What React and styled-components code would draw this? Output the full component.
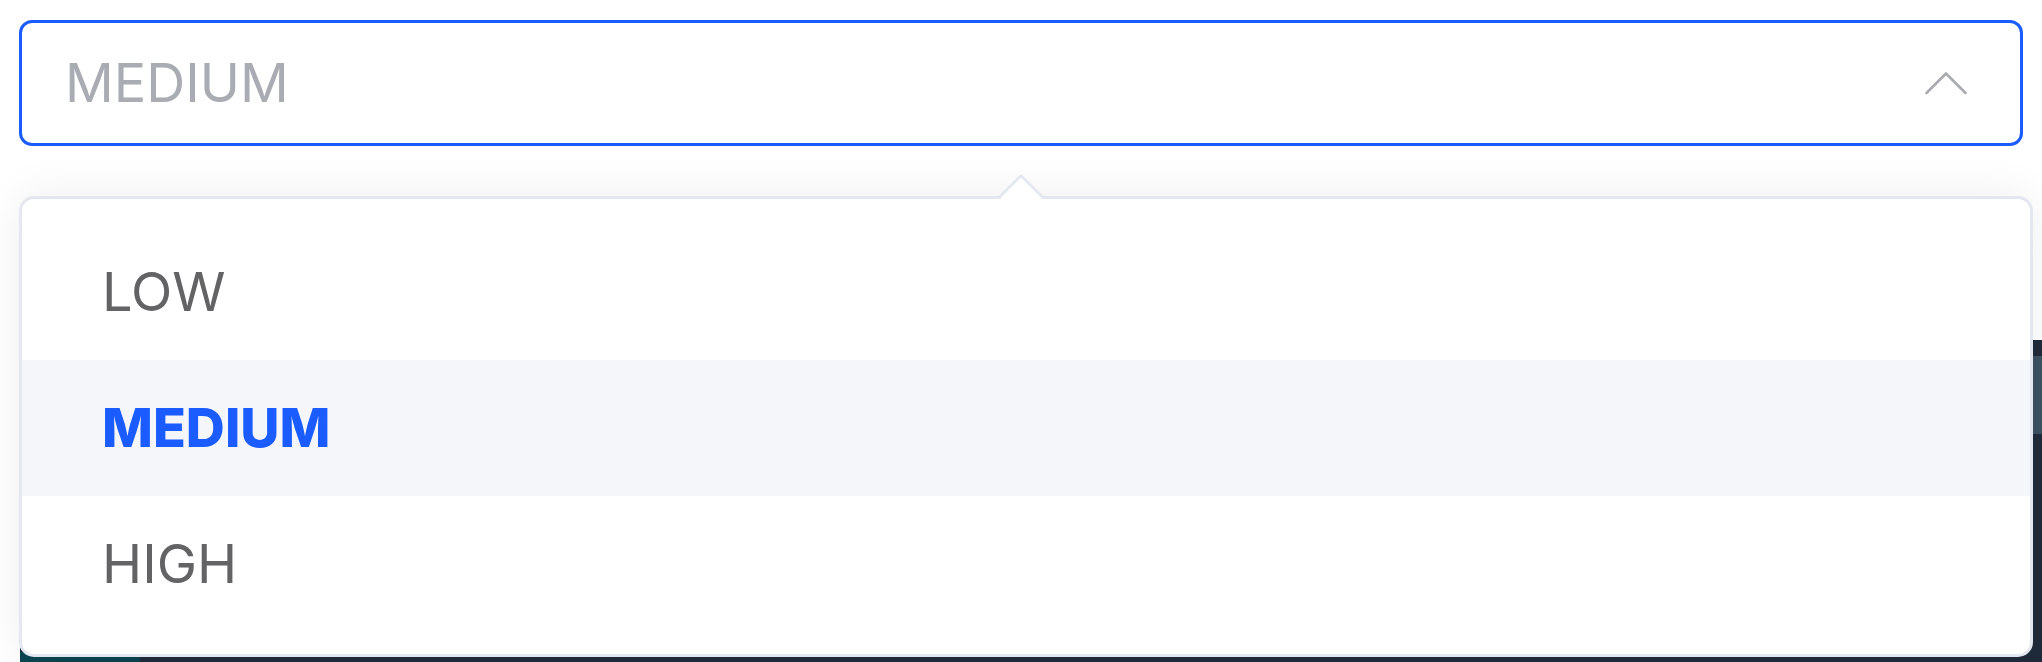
import React from "react";
import styled, { createGlobalStyle } from "styled-components";

const GlobalStyle = createGlobalStyle`
  html, body { margin: 0; padding: 0; background: #ffffff; }
  body { font-family: Inter, "Noto Sans", sans-serif; }
`;

const Page = styled.div`
  position: relative;
  width: 2042px;
  height: 662px;
  overflow: hidden;
  box-sizing: border-box;
  padding: 20px 9px 0 19px;
  display: flex;
  flex-direction: column;
  gap: 50px;
`;

const Underlay = styled.div`
  position: absolute;
  left: 20px;
  top: 340px;
  right: 0;
  bottom: 0;
  background: #1f2b3b;
  z-index: 0;
`;

const UnderlayTeal = styled.div`
  position: absolute;
  left: 0;
  bottom: 0;
  width: 120px;
  height: 10px;
  background: #0c4550;
`;

const UnderlaySlate = styled.div`
  position: absolute;
  right: 0;
  top: 16px;
  width: 10px;
  height: 78px;
  background: #3c5262;
`;

const Field = styled.div`
  position: relative;
  z-index: 1;
  box-sizing: border-box;
  width: 2004px;
  height: 126px;
  border: 3px solid #1a5cff;
  border-radius: 13px;
  background: #ffffff;
  display: flex;
  align-items: center;
  justify-content: space-between;
  padding: 0 53px 0 43px;
`;

const FieldValue = styled.span`
  font-size: 54px;
  font-weight: 400;
  color: #a9acb3;
  line-height: 1;
`;

const Menu = styled.div`
  position: relative;
  z-index: 1;
  box-sizing: border-box;
  width: 2014px;
  height: 461px;
  border: 3px solid #e4e7ef;
  border-radius: 15px;
  background: #ffffff;
  box-shadow: 0 0 48px rgba(0, 0, 0, 0.07);
  padding: 25px 0 22px;
  display: flex;
  flex-direction: column;
`;

const Caret = styled.div`
  position: absolute;
  top: -19px;
  left: 983px;
  width: 29px;
  height: 29px;
  background: #ffffff;
  border-top: 3px solid #e4e7ef;
  border-left: 3px solid #e4e7ef;
  border-top-left-radius: 4px;
  transform: rotate(45deg);
`;

const Option = styled.div`
  height: 136px;
  display: flex;
  align-items: center;
  padding-left: 80px;
  background: ${(p) => (p.$active ? "#f5f6f9" : "transparent")};
  font-size: 54px;
  line-height: 1;
  font-weight: ${(p) => (p.$active ? 800 : 400)};
  color: ${(p) => (p.$active ? "#1a5cff" : "#636366")};
`;

const Chevron = () => (
  <svg width="42" height="24" viewBox="0 0 42 24" fill="none">
    <polyline
      points="1.5,22 21,2.5 40.5,22"
      stroke="#a9abb0"
      strokeWidth="2.6"
      strokeLinecap="round"
      strokeLinejoin="round"
    />
  </svg>
);

const options = ["LOW", "MEDIUM", "HIGH"];

export default function App() {
  const selected = "MEDIUM";
  return (
    <>
      <GlobalStyle />
      <Page>
        <Underlay>
          <UnderlayTeal />
          <UnderlaySlate />
        </Underlay>
        <Field>
          <FieldValue>{selected}</FieldValue>
          <Chevron />
        </Field>
        <Menu>
          <Caret />
          {options.map((o) => (
            <Option key={o} $active={o === selected}>
              {o}
            </Option>
          ))}
        </Menu>
      </Page>
    </>
  );
}
